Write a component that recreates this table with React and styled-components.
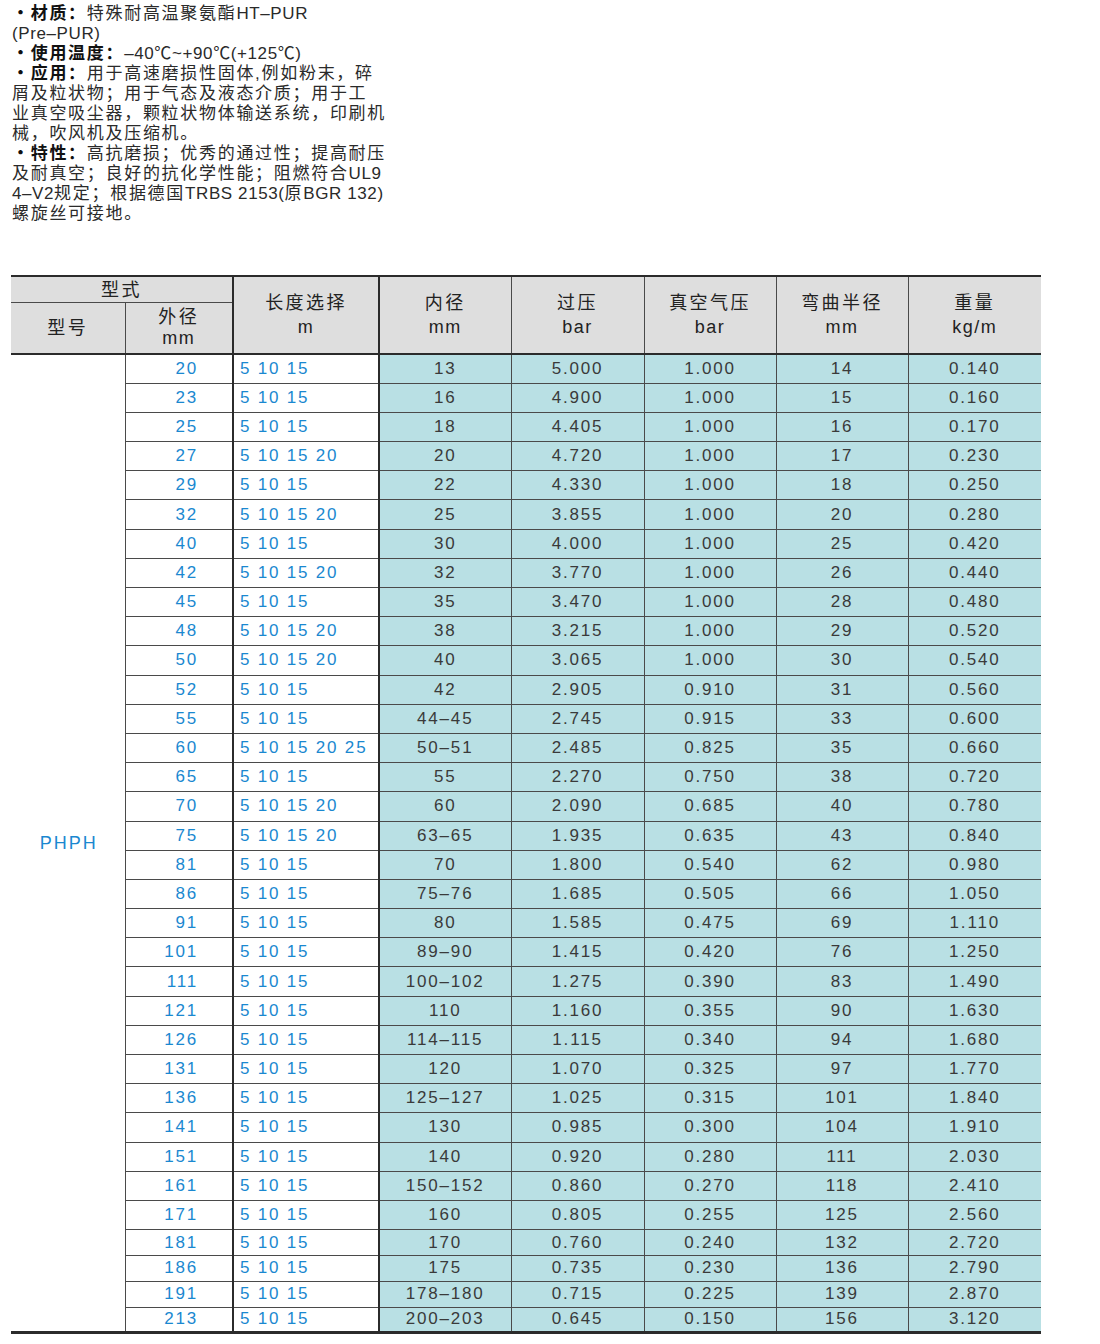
import React from 'react';
import styled, { createGlobalStyle } from 'styled-components';

const GlobalStyle = createGlobalStyle`
  body {
    margin: 0;
    background: #ffffff;
  }
`;

const Page = styled.div`
  width: 1100px;
  box-sizing: border-box;
  padding: 4px 0 0 11px;
  font-family: "Liberation Sans", "Noto Sans CJK SC", sans-serif;
`;

const Intro = styled.div`
  margin-left: 1px;
  font-size: 17px;
  line-height: 20px;
  letter-spacing: 1.7px;
  color: #2a2a2a;
  white-space: nowrap;
`;

const Label = styled.b`
  font-weight: bold;
  color: #111;
`;

// latin runs sit tighter than the CJK glyphs around them
const Latin = styled.span`
  letter-spacing: 0.6px;
`;

const Table = styled.table`
  margin-top: 51px;
  width: 1030px;
  border-collapse: collapse;
  table-layout: fixed;
  border-top: 2px solid #2b2b2b;
  color: #3a3a3a;
`;

const Head = styled.th`
  background: #dedede;
  color: #222;
  font-weight: normal;
  font-size: 18px;
  line-height: 24px;
  letter-spacing: 2.4px;
  text-align: center;
  vertical-align: middle;
  padding: 0;
  height: ${(p) => p.$h || 'auto'};
  border-left: ${(p) => (p.$thick ? '2px solid #2b2b2b' : p.$first ? 'none' : '1px solid #4a4a4a')};
  border-right: ${(p) => (p.$thick ? '2px solid #2b2b2b' : 'none')};
  border-bottom: ${(p) => (p.$sub ? '1px solid #4a4a4a' : '2px solid #2b2b2b')};
`;

const Unit = styled.span`
  display: block;
  letter-spacing: 1.5px;
`;

const Row = styled.tr`
  height: ${(p) => (p.$short ? '25.8px' : '29.2px')};
`;

const Cell = styled.td`
  padding: 0;
  font-size: 17px;
  letter-spacing: 1.8px;
  line-height: 20px;
  white-space: nowrap;
  vertical-align: middle;
  text-align: center;
  background: ${(p) => (p.$data ? '#b9e0e4' : '#ffffff')};
  color: ${(p) => (p.$data ? '#3a3a3a' : '#1a88d0')};
  border-left: ${(p) => (p.$data && !p.$afterThick ? '1px solid #4a4a4a' : 'none')};
  border-bottom: ${(p) => (p.$last ? '3px solid #2b2b2b' : '1px solid #4a4a4a')};
`;

const Model = styled.td`
  padding: 0 0 0 2px;
  text-align: center;
  vertical-align: middle;
  font-size: 18px;
  letter-spacing: 2px;
  color: #1a88d0;
  background: #ffffff;
  border-right: 1px solid #4a4a4a;
  border-bottom: 3px solid #2b2b2b;
`;

const OuterCell = styled(Cell)`
  text-align: right;
  padding-right: 34px;
`;

const LengthCell = styled(Cell)`
  text-align: left;
  padding-left: 6px;
  border-left: 2px solid #2b2b2b;
  border-right: 2px solid #2b2b2b;
`;

const widths = [114, 108, 146, 132, 133, 132, 132, 133];

const rows = [
  [20, '5 10 15', '13', '5.000', '1.000', '14', '0.140'],
  [23, '5 10 15', '16', '4.900', '1.000', '15', '0.160'],
  [25, '5 10 15', '18', '4.405', '1.000', '16', '0.170'],
  [27, '5 10 15 20', '20', '4.720', '1.000', '17', '0.230'],
  [29, '5 10 15', '22', '4.330', '1.000', '18', '0.250'],
  [32, '5 10 15 20', '25', '3.855', '1.000', '20', '0.280'],
  [40, '5 10 15', '30', '4.000', '1.000', '25', '0.420'],
  [42, '5 10 15 20', '32', '3.770', '1.000', '26', '0.440'],
  [45, '5 10 15', '35', '3.470', '1.000', '28', '0.480'],
  [48, '5 10 15 20', '38', '3.215', '1.000', '29', '0.520'],
  [50, '5 10 15 20', '40', '3.065', '1.000', '30', '0.540'],
  [52, '5 10 15', '42', '2.905', '0.910', '31', '0.560'],
  [55, '5 10 15', '44–45', '2.745', '0.915', '33', '0.600'],
  [60, '5 10 15 20 25', '50–51', '2.485', '0.825', '35', '0.660'],
  [65, '5 10 15', '55', '2.270', '0.750', '38', '0.720'],
  [70, '5 10 15 20', '60', '2.090', '0.685', '40', '0.780'],
  [75, '5 10 15 20', '63–65', '1.935', '0.635', '43', '0.840'],
  [81, '5 10 15', '70', '1.800', '0.540', '62', '0.980'],
  [86, '5 10 15', '75–76', '1.685', '0.505', '66', '1.050'],
  [91, '5 10 15', '80', '1.585', '0.475', '69', '1.110'],
  [101, '5 10 15', '89–90', '1.415', '0.420', '76', '1.250'],
  [111, '5 10 15', '100–102', '1.275', '0.390', '83', '1.490'],
  [121, '5 10 15', '110', '1.160', '0.355', '90', '1.630'],
  [126, '5 10 15', '114–115', '1.115', '0.340', '94', '1.680'],
  [131, '5 10 15', '120', '1.070', '0.325', '97', '1.770'],
  [136, '5 10 15', '125–127', '1.025', '0.315', '101', '1.840'],
  [141, '5 10 15', '130', '0.985', '0.300', '104', '1.910'],
  [151, '5 10 15', '140', '0.920', '0.280', '111', '2.030'],
  [161, '5 10 15', '150–152', '0.860', '0.270', '118', '2.410'],
  [171, '5 10 15', '160', '0.805', '0.255', '125', '2.560'],
  [181, '5 10 15', '170', '0.760', '0.240', '132', '2.720'],
  [186, '5 10 15', '175', '0.735', '0.230', '136', '2.790'],
  [191, '5 10 15', '178–180', '0.715', '0.225', '139', '2.870'],
  [213, '5 10 15', '200–203', '0.645', '0.150', '156', '3.120'],
];

function App() {
  return (
    <Page>
      <GlobalStyle />
      <Intro>
        <Label>・材质：</Label>特殊耐高温聚氨酯<Latin>HT–PUR</Latin><br />
        <Latin>(Pre–PUR)</Latin><br />
        <Label>・使用温度：</Label><Latin>–40℃~+90℃(+125℃)</Latin><br />
        <Label>・应用：</Label>用于高速磨损性固体,例如粉末，碎<br />
        屑及粒状物；用于气态及液态介质；用于工<br />
        业真空吸尘器，颗粒状物体输送系统，印刷机<br />
        械，吹风机及压缩机。<br />
        <Label>・特性：</Label>高抗磨损；优秀的通过性；提高耐压<br />
        及耐真空；良好的抗化学性能；阻燃符合<Latin>UL9</Latin><br />
        <Latin>4–V2</Latin>规定；根据德国<Latin>TRBS 2153(</Latin>原<Latin>BGR 132)</Latin><br />
        螺旋丝可接地。
      </Intro>

      <Table>
        <colgroup>
          {widths.map((w, i) => (
            <col key={i} style={{ width: w }} />
          ))}
        </colgroup>
        <thead>
          <tr>
            <Head colSpan={2} $sub $first $h="25px">型式</Head>
            <Head rowSpan={2} $thick>长度选择<Unit>m</Unit></Head>
            <Head rowSpan={2}>内径<Unit>mm</Unit></Head>
            <Head rowSpan={2}>过压<Unit>bar</Unit></Head>
            <Head rowSpan={2}>真空气压<Unit>bar</Unit></Head>
            <Head rowSpan={2}>弯曲半径<Unit>mm</Unit></Head>
            <Head rowSpan={2}>重量<Unit>kg/m</Unit></Head>
          </tr>
          <tr>
            <Head $first $h="50px">型号</Head>
            <Head style={{ lineHeight: '21px' }}>外径<Unit>mm</Unit></Head>
          </tr>
        </thead>
        <tbody>
          {rows.map((r, i) => {
            const last = i === rows.length - 1;
            return (
              <Row key={r[0]} $short={i >= 30}>
                {i === 0 && <Model rowSpan={rows.length}>PHPH</Model>}
                <OuterCell $last={last}>{r[0]}</OuterCell>
                <LengthCell $last={last}>{r[1]}</LengthCell>
                {r.slice(2).map((v, j) => (
                  <Cell key={j} $data $afterThick={j === 0} $last={last}>
                    {v}
                  </Cell>
                ))}
              </Row>
            );
          })}
        </tbody>
      </Table>
    </Page>
  );
}

export default App;
